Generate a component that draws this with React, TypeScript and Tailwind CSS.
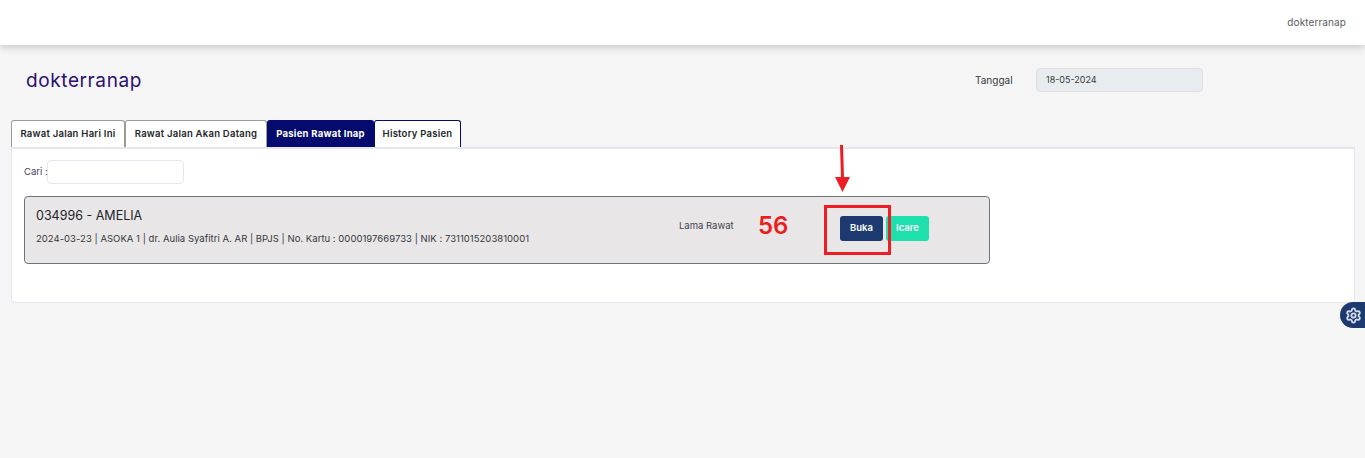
import { Settings } from "lucide-react";

const tabs = [
  { label: "Rawat Jalan Hari Ini", width: "w-[114px]", cls: "border-[#9a9a9a] bg-white font-semibold text-[#212529]" },
  { label: "Rawat Jalan Akan Datang", width: "w-[142px]", cls: "border-[#9a9a9a] bg-white font-semibold text-[#212529]" },
  { label: "Pasien Rawat Inap", width: "w-[107px]", cls: "border-[#050a6e] bg-[#050a6e] font-bold text-white" },
  { label: "History Pasien", width: "w-[87px]", cls: "border-[#050a6e] bg-white font-semibold text-[#212529]" },
];

export default function App() {
  return (
    <div className="relative h-[458px] w-[1365px] overflow-hidden bg-[#f5f5f5] font-['Inter',sans-serif]">
      {/* Top bar */}
      <div className="flex h-[45px] items-center justify-end bg-white pr-[19px] pb-[1px] shadow-[0_2px_8px_rgba(0,0,0,0.2)]">
        <span className="text-[10px] tracking-[0.1px] text-[#5a5c60]">dokterranap</span>
      </div>

      {/* Title row */}
      <div className="mb-[5px] flex h-[70px] items-center pl-[26px]">
        <div className="w-[949px] text-[19px] leading-none tracking-[0.6px] text-[#2b0f73]">dokterranap</div>
        <div className="w-[61px] text-[10px] text-[#343a40]">Tanggal</div>
        <div className="flex h-[24px] w-[167px] items-center rounded-[4px] border border-[#dcdfea] bg-[#e9ecef] pl-[9px] text-[9px] text-[#343a40]">
          18-05-2024
        </div>
      </div>

      {/* Tabs */}
      <div className="ml-[11px] flex h-[27px]">
        {tabs.map((tab) => (
          <div
            key={tab.label}
            className={`flex items-center justify-center rounded-t-[3px] border border-b-0 text-[9.5px] tracking-[0.25px] ${tab.width} ${tab.cls}`}
          >
            {tab.label}
          </div>
        ))}
      </div>

      {/* Card */}
      <div className="mx-[10px] ml-[11px] h-[156px] rounded-b-[4px] border border-t-2 border-[#e4e6f0] bg-white pt-[11px] pl-[12px]">
        <div className="flex h-[24px] items-center">
          <span className="w-[23px] whitespace-nowrap text-[9.5px] text-[#4a3f5c]">Cari :</span>
          <div className="h-[24px] w-[137px] rounded-[4px] border border-[#e4e6f0] bg-white" />
        </div>

        <div className="mt-[12px] flex h-[68px] w-[966px] items-center rounded-[4px] border border-[#6c757d] bg-[#e9e6e7] pl-[11px]">
          <div className="mb-[7px] w-[643px]">
            <div className="text-[12.5px] leading-none text-[#212529]">034996 - AMELIA</div>
            <div className="mt-[12px] text-[9.5px] leading-none tracking-[0.03px] text-[#343a40]">
              2024-03-23 | ASOKA 1 | dr. Aulia Syafitri A. AR | BPJS | No. Kartu : 0000197669733 | NIK : 7311015203810001
            </div>
          </div>
          <div className="mb-[8px] w-[79px] text-[9.5px] leading-none text-[#3f4250]">Lama Rawat</div>
          <div className="mb-[9px] w-[82px] text-[24px] leading-none font-semibold text-[#ee1c1c]">56</div>
          <div className="mb-[3px] flex gap-[3px]">
            <div className="flex h-[25px] w-[43px] items-center justify-center rounded-[3px] bg-[#1c3a70] text-[9.5px] font-semibold text-white">
              Buka
            </div>
            <div className="flex h-[25px] w-[43px] items-center justify-center rounded-[3px] bg-[#1de0ad] text-[9.5px] font-semibold text-white">
              Icare
            </div>
          </div>
        </div>
      </div>

      {/* Settings toggle */}
      <div className="absolute top-[302px] right-0 flex h-[26px] w-[25px] items-center justify-center rounded-l-full bg-[#1c3a70]">
        <Settings className="ml-[2px] h-[17px] w-[17px] text-[#d5dbe8]" strokeWidth={2.6} />
      </div>

      {/* Red annotation */}
      <div className="absolute top-[205px] left-[824px] h-[50px] w-[67px] border-[3px] border-[#ee1c24]" />
      <svg className="absolute top-[144px] left-[830px]" width="24" height="50" viewBox="0 0 24 50">
        <path d="M11.5 1 L12.5 34" stroke="#ee1c24" strokeWidth="3" fill="none" />
        <path d="M5 33 H20 L12.5 48 Z" fill="#ee1c24" />
      </svg>
    </div>
  );
}
